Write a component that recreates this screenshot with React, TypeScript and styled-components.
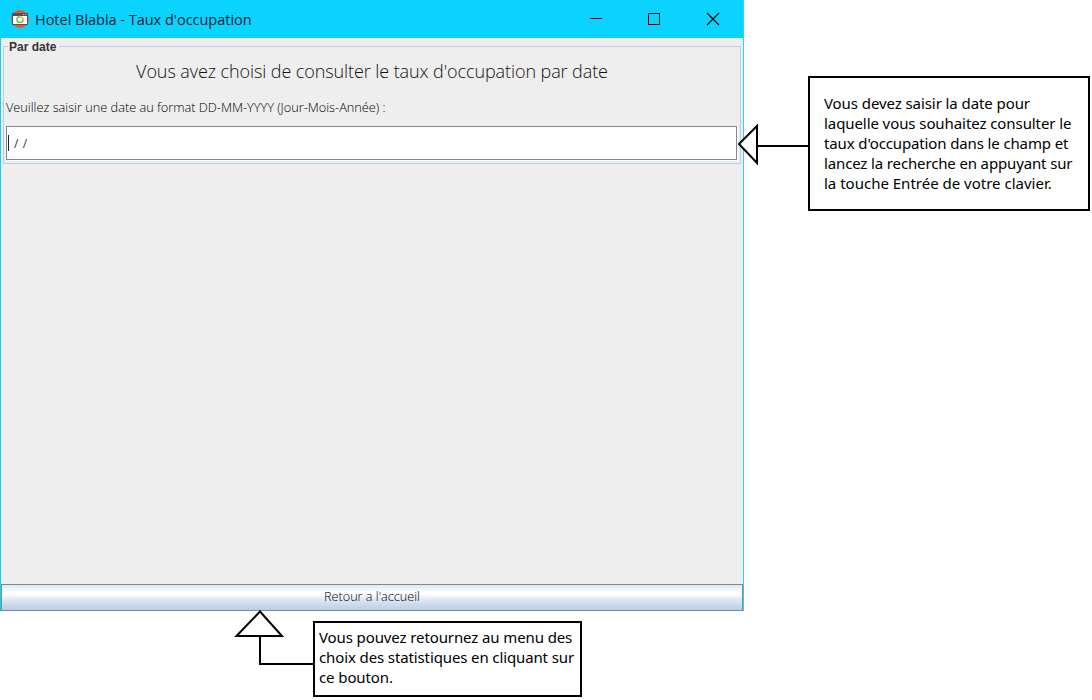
import React from "react";
import styled, { createGlobalStyle } from "styled-components";

const Global = createGlobalStyle`
  * { box-sizing: border-box; }
  body { margin: 0; background: #fff; }
`;

const Page = styled.main`
  position: relative;
  width: 1092px;
  height: 700px;
  overflow: hidden;
  background: #fff;
`;

const Window = styled.section`
  display: flex;
  flex-direction: column;
  width: 744px;
  height: 611px;
  background: #eee;
  border: solid #0bd3ff;
  border-width: 0 1px;
  border-right-color: #38cdf0;
`;

const TitleBar = styled.header`
  display: flex;
  align-items: center;
  height: 38px;
  flex: none;
  padding-left: 10px;
  background: #0bd3ff;
`;

const Title = styled.h1`
  flex: 1;
  margin: 1px 0 0 6px;
  font: 400 14.5px/20px "Open Sans", "Noto Sans", sans-serif;
  letter-spacing: -0.02px;
  color: #04222b;
  white-space: nowrap;
`;

const Controls = styled.div`
  display: flex;
  gap: 45px;
  padding-right: 23px;
`;

const Body = styled.div`
  display: flex;
  flex: 1;
  flex-direction: column;
  justify-content: space-between;
`;

const Group = styled.fieldset`
  height: 126px;
  min-width: 0;
  margin: 0 2px;
  padding: 0 3px 3px 2px;
  display: flex;
  flex-direction: column;
  border: 1px solid #b8cfe5;
`;

const Legend = styled.legend`
  margin-left: 2px;
  padding: 1px 3px 0 1px;
  font: 700 12px/16px "Liberation Sans", Arial, sans-serif;
  color: #333;
`;

const Heading = styled.h2`
  margin: 0;
  height: 38px;
  padding-left: 1px;
  text-align: center;
  font: 300 18px/32px "Open Sans", "Noto Sans", sans-serif;
  letter-spacing: -0.09px;
  color: #111;
  white-space: nowrap;
`;

const Label = styled.label`
  height: 33px;
  font: 300 12.75px/28px "Open Sans", "Noto Sans", sans-serif;
  letter-spacing: -0.01px;
  color: #000;
  white-space: nowrap;
`;

const Field = styled.div`
  display: flex;
  align-items: center;
  height: 34px;
  padding-left: 1px;
  background: #fff;
  border: 1px solid #7a8a99;
  box-shadow: 1px 1px #fff;
  font: 400 12px/16px "Open Sans", sans-serif;
  color: #333;
`;

const Caret = styled.span`
  width: 1px;
  height: 16px;
  margin-right: 5px;
  background: #222;
`;

const Mask = styled.span`
  padding-top: 2px;
  letter-spacing: 0.6px;
  white-space: pre;
`;

const BackButton = styled.button`
  height: 27px;
  padding: 0 0 3px;
  border: 1px solid #7a8a99;
  background: linear-gradient(#dde8f3 0%, #fff 30%, #fff 36%, #dae5f1 62%, #b8cfe5 100%);
  font: 300 12.65px/22px "Open Sans", "Noto Sans", sans-serif;
  color: #000;
`;

const Callout = styled.aside<{ $x: number; $y: number; $w: number; $h: number; $pad: string }>`
  position: absolute;
  left: ${(p) => p.$x}px;
  top: ${(p) => p.$y}px;
  width: ${(p) => p.$w}px;
  height: ${(p) => p.$h}px;
  padding: ${(p) => p.$pad};
  border: 2px solid #000;
  background: #fff;
  font: 400 15px/20px "Noto Sans", sans-serif;
  color: #000;
`;

const Line = styled.span<{ $ls: number }>`
  display: block;
  white-space: nowrap;
  letter-spacing: ${(p) => p.$ls}px;
`;

const Arrow = styled.svg<{ $x: number; $y: number }>`
  position: absolute;
  left: ${(p) => p.$x}px;
  top: ${(p) => p.$y}px;
  fill: #fff;
  stroke: #000;
  stroke-width: 2;
`;

function AppIcon() {
  return (
    <svg width="18" height="18" viewBox="0 0 18 18">
      <circle cx="9" cy="9" r="9" fill="#f0562b" />
      <rect x="1" y="3" width="16" height="12" fill="#4c5361" />
      <rect x="2" y="6" width="14" height="8" fill="#fff" />
      <path d="M12 4.5h1M14 4.5h1" stroke="#c9ccd2" />
      <path d="M9 6.7H7.2L6 8.5v2.2L7.5 12.3h3.2l1.2-1.5" fill="none" stroke="#59c944" strokeWidth="1.4" />
      <path d="M8 6.3l2.5 1.2 1.5 1" fill="none" stroke="#f5c631" strokeWidth="1.5" />
      <path d="M12 8.5v2.5" stroke="#ef6136" strokeWidth="1.2" />
    </svg>
  );
}

type CalloutLine = { text: string; spacing: number };

const searchHelp: CalloutLine[] = [
  { text: "Vous devez saisir la date pour", spacing: -0.08 },
  { text: "laquelle vous souhaitez consulter le", spacing: -0.08 },
  { text: "taux d'occupation dans le champ et", spacing: -0.13 },
  { text: "lancez la recherche en appuyant sur", spacing: -0.14 },
  { text: "la touche Entrée de votre clavier.", spacing: 0 },
];

const backHelp: CalloutLine[] = [
  { text: "Vous pouvez retournez au menu des", spacing: -0.11 },
  { text: "choix des statistiques en cliquant sur", spacing: -0.12 },
  { text: "ce bouton.", spacing: -0.1 },
];

export default function App() {
  return (
    <Page>
      <Global />
      <Window>
        <TitleBar>
          <AppIcon />
          <Title>Hotel Blabla - Taux d'occupation</Title>
          <Controls>
            <svg width="14" height="14" stroke="#000"><path d="M2 6.5h12" /></svg>
            <svg width="14" height="14" stroke="#000" fill="none"><rect x="1.5" y="1.5" width="11" height="11" /></svg>
            <svg width="14" height="14" stroke="#000" strokeWidth="1.1"><path d="M1 1l12 12M13 1L1 13" /></svg>
          </Controls>
        </TitleBar>
        <Body>
          <Group>
            <Legend>Par date</Legend>
            <Heading>Vous avez choisi de consulter le taux d'occupation par date</Heading>
            <Label>Veuillez saisir une date au format DD-MM-YYYY (Jour-Mois-Année) :</Label>
            <Field><Caret /><Mask>/ /</Mask></Field>
          </Group>
          <BackButton>Retour a l'accueil</BackButton>
        </Body>
      </Window>
      <Arrow $x={736} $y={122} width="74" height="44">
        <path d="M21 24H74" />
        <path d="M3 22L21 4V41Z" />
      </Arrow>
      <Callout $x={808} $y={76} $w={282} $h={135} $pad="15px 14px">
        {searchHelp.map((l) => <Line key={l.text} $ls={l.spacing}>{l.text}</Line>)}
      </Callout>
      <Arrow $x={232} $y={608} width="84" height="60">
        <path d="M28 28V56H84" fill="none" />
        <path d="M4.5 28L28 3.5L50 28Z" />
      </Arrow>
      <Callout $x={313} $y={621} $w={269} $h={76} $pad="4px 4px">
        {backHelp.map((l) => <Line key={l.text} $ls={l.spacing}>{l.text}</Line>)}
      </Callout>
    </Page>
  );
}
